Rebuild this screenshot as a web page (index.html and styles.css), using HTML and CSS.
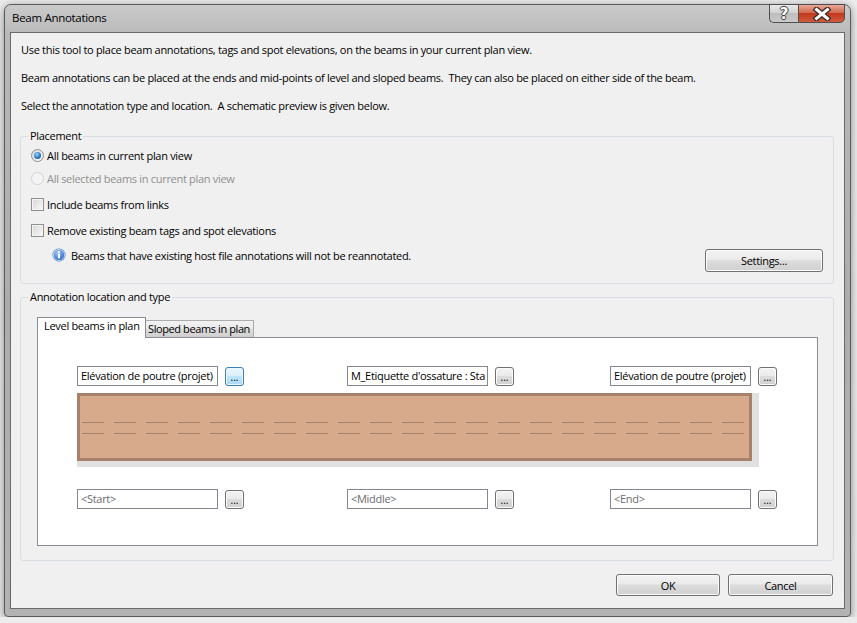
FILE: index.html
```html
<!DOCTYPE html>
<html lang="en">
<head>
  <meta charset="UTF-8" />
  <title>Beam Annotations</title>
  <link rel="stylesheet" href="styles.css">
</head>
<body>
  <div class="window">
    <div class="titlebar">
      <span class="title">Beam Annotations</span>
      <div class="controls">
        <div class="ctl help">?</div>
        <div class="ctl close">
          <svg width="20" height="14" viewBox="0 0 20 14">
            <path d="M4.5 2.5 L15.5 11.5 M15.5 2.5 L4.5 11.5" stroke="#3a2a26" stroke-width="5.5" stroke-linecap="square"/>
            <path d="M4.5 2.5 L15.5 11.5 M15.5 2.5 L4.5 11.5" stroke="#fff" stroke-width="3" stroke-linecap="square"/>
          </svg>
        </div>
      </div>
    </div>

    <div class="client">
      <div class="intro">
        <p>Use this tool to place beam annotations, tags and spot elevations, on the beams in your current plan view.</p>
        <p>Beam annotations can be placed at the ends and mid-points of level and sloped beams.&nbsp; They can also be placed on either side of the beam.</p>
        <p>Select the annotation type and location.&nbsp; A schematic preview is given below.</p>
      </div>

      <fieldset class="group placement">
        <legend>Placement</legend>
        <div class="option first">
          <span class="radio checked"></span>
          <span>All beams in current plan view</span>
        </div>
        <div class="option disabled">
          <span class="radio"></span>
          <span>All selected beams in current plan view</span>
        </div>
        <div class="option check-row">
          <span class="check"></span>
          <span>Include beams from links</span>
        </div>
        <div class="option check-row">
          <span class="check"></span>
          <span>Remove existing beam tags and spot elevations</span>
        </div>
        <div class="info-row">
          <svg class="info-icon" width="14" height="14" viewBox="0 0 14 14">
            <defs>
              <radialGradient id="ig" cx="0.4" cy="0.3" r="0.8">
                <stop offset="0" stop-color="#a9cdf5"/>
                <stop offset="0.6" stop-color="#4f87d6"/>
                <stop offset="1" stop-color="#2457a8"/>
              </radialGradient>
            </defs>
            <circle cx="7" cy="7" r="6.5" fill="#3a6fba"/>
            <circle cx="7" cy="7" r="5.6" fill="url(#ig)" stroke="#dce8f7" stroke-width="0.8"/>
            <circle cx="7" cy="4" r="1.1" fill="#fff"/>
            <rect x="6" y="5.8" width="2" height="4.6" fill="#fff"/>
          </svg>
          <span class="info-text">Beams that have existing host file annotations will not be reannotated.</span>
          <button class="btn settings">Settings...</button>
        </div>
      </fieldset>

      <fieldset class="group annotation">
        <legend>Annotation location and type</legend>
        <div class="tabs">
          <div class="tab active">Level beams in plan</div>
          <div class="tab">Sloped beams in plan</div>
        </div>
        <div class="panel">
          <div class="field-row">
            <div class="cell">
              <div class="field">Elévation de poutre (projet)</div>
              <div class="mini hover">...</div>
            </div>
            <div class="cell">
              <div class="field">M_Etiquette d'ossature : Sta</div>
              <div class="mini">...</div>
            </div>
            <div class="cell">
              <div class="field">Elévation de poutre (projet)</div>
              <div class="mini">...</div>
            </div>
          </div>

          <div class="beam-wrap">
            <div class="beam">
              <div class="dash first"></div>
              <div class="dash"></div>
            </div>
          </div>

          <div class="field-row lower">
            <div class="cell">
              <div class="field empty">&lt;Start&gt;</div>
              <div class="mini">...</div>
            </div>
            <div class="cell">
              <div class="field empty">&lt;Middle&gt;</div>
              <div class="mini">...</div>
            </div>
            <div class="cell">
              <div class="field empty">&lt;End&gt;</div>
              <div class="mini">...</div>
            </div>
          </div>
        </div>
      </fieldset>

      <div class="footer">
        <button class="btn dlg">OK</button>
        <button class="btn dlg">Cancel</button>
      </div>
    </div>
  </div>
</body>
</html>
```

FILE: styles.css
```css
* {
  box-sizing: border-box;
}
body {
  margin: 0;
  background: #ececec;
  font-family: 'Open Sans', 'Noto Sans', sans-serif;
  font-size: 11px;
  letter-spacing: -0.3px;
  color: #000;
}
.window {
  margin: 4px 0 0 4px;
  width: 847px;
  height: 613px;
  border: 1px solid #5a5a5a;
  border-radius: 7px 7px 4px 4px;
  background: linear-gradient(#cacaca, #b9b9b9 30px, #acacac 300px, #b3b3b3);
  box-shadow: 0 2px 8px rgba(0, 0, 0, 0.45);
}
.titlebar {
  height: 27px;
  display: flex;
  justify-content: space-between;
  align-items: flex-start;
  padding-left: 7px;
}
.title {
  line-height: 26px;
  font-size: 11.5px;
}
.controls {
  display: flex;
  margin-top: -1px;
  margin-right: 5px;
}
.ctl {
  height: 19px;
  border: 1px solid #4e4e4e;
  display: flex;
  align-items: center;
  justify-content: center;
}
.help {
  width: 29px;
  border-right: none;
  border-radius: 0 0 0 5px;
  background: linear-gradient(#e9e9e9, #d2d2d2 45%, #bdbdbd 50%, #c9c9c9);
  color: #fff;
  font-family: 'DejaVu Sans', sans-serif;
  font-weight: bold;
  font-size: 15px;
  letter-spacing: 0;
  text-shadow: 1px 0 #3b3b3b, -1px 0 #3b3b3b, 0 1px #3b3b3b, 0 -1px #3b3b3b;
}
.close {
  width: 47px;
  border-radius: 0 0 5px 0;
  background: linear-gradient(#e9a896, #d26a51 45%, #c2391d 50%, #d35b3e);
}
.client {
  margin: 0 5px;
  height: 577px;
  border: 1px solid #6a6a6a;
  background: #f0f0f0;
}
.intro {
  padding: 9px 10px 0;
}
.intro p {
  margin: 0 0 12px;
  line-height: 16px;
}
.intro p:last-child {
  margin-bottom: 0;
}
.group {
  margin: 0 10px 0 9px;
  border: 1px solid #d7dde2;
  border-radius: 3px;
  min-width: 0;
}
.group legend {
  padding: 0 2px;
  line-height: 16px;
}
.placement {
  margin-top: 14px;
  padding: 3px 10px 12px 10px;
}
.placement legend {
  margin-left: -3px;
}
.option {
  display: flex;
  align-items: center;
  height: 16px;
  margin-top: 7px;
}
.option.first {
  margin-top: 0;
}
.option.check-row {
  margin-top: 10px;
}
.option.disabled {
  color: #8f8f8f;
}
.radio {
  width: 13px;
  height: 13px;
  margin-right: 3px;
  border-radius: 50%;
  border: 1px solid #8e8f8f;
  background: linear-gradient(135deg, #d8d8d8, #fbfbfb);
  display: flex;
  align-items: center;
  justify-content: center;
}
.radio.checked::after {
  content: '';
  width: 7px;
  height: 7px;
  border-radius: 50%;
  background: radial-gradient(circle at 40% 35%, #9fd4f7, #2a78c6 55%, #17457f);
}
.disabled .radio {
  border-color: #d2d2d2;
  background: #f4f4f4;
}
.check {
  width: 13px;
  height: 13px;
  margin-right: 3px;
  border: 1px solid #8e8f8f;
  background: linear-gradient(135deg, #d6d6d6, #f9f9f9);
  box-shadow: inset 0 0 0 1px #f4f4f4;
}
.info-row {
  display: flex;
  align-items: flex-start;
  margin-top: 10px;
  height: 23px;
}
.info-icon {
  margin: 0 5px 0 21px;
}
.info-text {
  line-height: 15px;
  flex: 1;
}
.btn {
  font-family: inherit;
  font-size: 11px;
  letter-spacing: -0.3px;
  color: #000;
  border: 1px solid #707070;
  border-radius: 3px;
  background: linear-gradient(#f2f2f2, #ebebeb 45%, #dddddd 50%, #cfcfcf);
  box-shadow: inset 0 0 0 1px #fcfcfc;
  padding: 0;
}
.settings {
  width: 118px;
  height: 23px;
  margin-top: 1px;
}
.annotation {
  margin-top: 5px;
  padding: 12px 15px 14px 16px;
}
.annotation legend {
  margin-left: -9px;
}
.tabs {
  display: flex;
  align-items: flex-end;
}
.tab {
  width: 108px;
  height: 17px;
  border: 1px solid #acacac;
  border-bottom: none;
  border-left: none;
  background: linear-gradient(#f2f2f2, #ebebeb 45%, #dddddd 50%, #cfcfcf);
  padding-left: 2px;
  line-height: 15px;
  white-space: nowrap;
  letter-spacing: -0.4px;
}
.tab.active {
  width: 109px;
  height: 21px;
  margin-bottom: -1px;
  border: 1px solid #898c95;
  border-bottom: none;
  background: #fff;
  padding-left: 6px;
  line-height: 16px;
  letter-spacing: -0.3px;
  position: relative;
  z-index: 1;
}
.panel {
  height: 209px;
  border: 1px solid #898c95;
  background: #fff;
  padding: 28px 0 0 39px;
}
.field-row {
  display: grid;
  grid-template-columns: 270px 263px auto;
}
.field-row.lower {
  margin-top: 22px;
}
.cell {
  display: flex;
  align-items: flex-start;
}
.field {
  width: 141px;
  height: 20px;
  border: 1px solid #828790;
  background: #fff;
  padding-left: 3px;
  line-height: 17px;
  white-space: nowrap;
  overflow: hidden;
}
.field.empty {
  color: #6d6d6d;
}
.mini {
  width: 19px;
  height: 19px;
  margin: 1px 0 0 7px;
  border: 1px solid #707070;
  border-radius: 3px;
  background: linear-gradient(#f3f3f3, #ebebeb 45%, #dcdcdc 50%, #d0d0d0);
  box-shadow: inset 0 0 0 1px #fbfbfb;
  text-align: center;
  line-height: 19px;
  font-size: 10px;
  letter-spacing: 0;
}
.mini.hover {
  border-color: #3c7fb1;
  background: linear-gradient(#eaf6fd, #d9f0fc 45%, #bee6fd 50%, #a7d9f5);
  box-shadow: inset 0 0 0 1px #ecf8fe;
}
.beam-wrap {
  margin-top: 7px;
  width: 682px;
  height: 74px;
  padding: 0 7px 6px 0;
  background: #e1e1e1;
}
.beam {
  height: 68px;
  border: 3px solid #a6816b;
  background: #d6aa8b;
  padding: 0 2px;
}
.dash {
  height: 1px;
  margin-top: 10px;
  background: repeating-linear-gradient(to right, #a5826c 0 22px, transparent 22px 32px);
}
.dash.first {
  margin-top: 26px;
}
.footer {
  display: flex;
  justify-content: flex-end;
  gap: 8px;
  margin: 13px 11px 0 0;
}
.dlg {
  width: 104px;
  height: 22px;
}
.dlg + .dlg {
  width: 105px;
}
```
